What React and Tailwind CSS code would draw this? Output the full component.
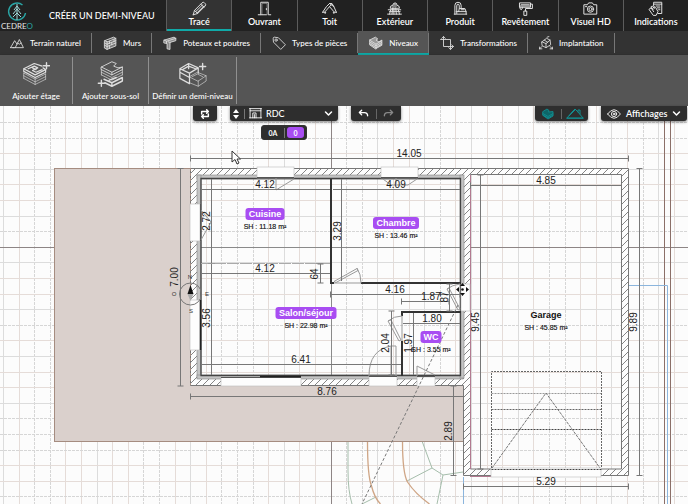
import React from "react";

const iconProps = {
  viewBox: "0 0 24 24",
  fill: "none",
  stroke: "currentColor",
  strokeLinejoin: "round",
  strokeLinecap: "round",
  "aria-hidden": true,
};

function Icon({ className, sw = 1.5, children }) {
  return (
    <svg {...iconProps} strokeWidth={sw} className={className}>
      {children}
    </svg>
  );
}

const tabs = [
  {
    label: "Tracé",
    active: true,
    icon: (
      <>
        <path d="M2 22l2-7L16 3q2-2 4 0l1 1q2 2 0 4L9 20l-7 2zM4 15l5 5M14 5l5 5M6 17L17 6M8 19L19 8" />
      </>
    ),
  },
  {
    label: "Ouvrant",
    icon: (
      <>
        <path d="M2 22h4V2h12v20h4M6 22h9M15 12v2" />
        <path d="M8 22V4h8v18" opacity=".4" />
      </>
    ),
  },
  {
    label: "Toit",
    icon: <path d="M1 18L7 9l5-5 7 5 4 9M1 18h5M5 20v-3l7-8 7 8v3M18 18h5M12 4h4l3 5M12 9l3-3" />,
  },
  {
    label: "Extérieur",
    icon: (
      <>
        <path d="M5 11q0-4 4-4 1-4 4-4t3 4q4 0 4 4zM2 14h20M4 17h17M1 21h22M8 21l1-10M15 21l-1-10M11 21V11M4 21l2-7M20 21l-2-7" />
        <path d="M9 8h6M11 5h3" />
      </>
    ),
  },
  {
    label: "Produit",
    icon: (
      <path d="M3 21V7q0-5 5-5t5 5v4M6 20V8q0-3 2-3t2 3v4M2 21h20M5 17h16v4M9 17l1-5h9l2 5M13 14h5" />
    ),
  },
  {
    label: "Revêtement",
    icon: (
      <>
        <path d="M3 3h17v7H3zM20 5h3v7H12v4M10 16h4v7h-4z" />
        <path d="M3 8h17M5 6h13M3 10q0 4 2 4t2-4" />
      </>
    ),
  },
  {
    label: "Visuel HD",
    icon: (
      <>
        <path d="M2 6h5l2-3h6l2 3h5v15H2z" />
        <circle cx="12" cy="13" r="5" />
        <circle cx="12" cy="13" r="2.5" />
        <path d="M4 9h2" />
      </>
    ),
  },
  {
    label: "Indications",
    icon: (
      <>
        <path d="M9 8V2h13v18h-6M9 5h13M13 8h6M15 11h4M17 14h2" />
        <path d="M2 13l3-2 3 3-3-5 2-1 3 4V9l2 1 4 7-3 6H9zM5 11l4 6" />
      </>
    ),
  },
];

const tools = [
  {
    label: "Terrain naturel",
    first: true,
    icon: <path d="M1 20L8 8l4 6M5 20h18L16 6 9 20M1 20h6M13 12l3 2 3-2" />,
  },
  {
    label: "Murs",
    icon: (
      <>
        <path d="M3 8l15-6 4 2v13L7 23l-4-2zM3 8l4 2 15-6M7 10v13" fill="#777" />
        <path d="M7 14l15-6M7 18l15-6M11 9v4M15 11v4M19 6v4M11 17v4M3 12l4 2M3 16l4 2" />
      </>
    ),
  },
  {
    label: "Poteaux et poutres",
    icon: (
      <>
        <path d="M2 7l17-5 3 2v4L12 11v12l-5-1V13l-5-1z" fill="#888" />
        <path d="M2 7l4 2 16-5M6 9v3M12 11l-3-1" />
      </>
    ),
  },
  {
    label: "Types de pièces",
    icon: (
      <>
        <path d="M2 4q0-2 2-2l7 1 12 12-8 8L3 11z" />
        <circle cx="7" cy="7" r="2" />
      </>
    ),
  },
  {
    label: "Niveaux",
    active: true,
    icon: (
      <>
        <path d="M1 7l10-5 4 3-3 2 5 3 5-3v9l-11 6-10-7z" fill="#999" />
        <path d="M1 7l11 7 10-6M12 14v8M1 10l11 7 10-6M1 13l11 7 10-6" />
      </>
    ),
  },
  {
    label: "Transformations",
    icon: <path d="M6 1v17h17M1 6h17v17M3 4l3-3 3 3M15 20l3 3 3-3M20 15l3 3-3 3" />,
  },
  {
    label: "Implantation",
    icon: (
      <>
        <path d="M5 10l8-6 6 3 1 8-8 5-6-3zM5 10l7 3 7-6M12 13v7M9 7l6 4" />
        <path d="M1 22l4-4M1 22v-3M1 22h4M23 22l-4-4M23 22v-3M23 22h-4M14 2l3-1" />
      </>
    ),
  },
];

const actions = [
  {
    label: "Ajouter étage",
    width: "w-[73px]",
    icon: (
      <>
        <path d="M2 10l12-6 9 3M2 10l13 7 12-6-3-2M2 10v3l13 7 12-6v-3M7 10l7-3 4 2-6 3 4 2 7-3M12 9l4 2" strokeWidth="1.4" />
        <path d="M2 15l13 7 12-6M2 18l13 7 12-6M2 21l13 7 12-6M2 15v6M27 16v6M15 20v8" opacity=".7" />
        <path d="M28 3v7M24.500 6.500h7" strokeWidth="1.600" />
      </>
    ),
  },
  {
    label: "Ajouter sous-sol",
    width: "w-[76px]",
    icon: (
      <>
        <path d="M5 8l12-6 5 2-3 3 5 2 5-1v3l-12 6L5 11zM5 8l12 6 12-6M17 14v3" />
        <path d="M5 14l12 6 12-6M5 17l12 6 12-6M5 11v6M29 11v6" opacity=".8" />
        <path d="M8 22l9 4 12-6v4l-12 6-8-4M17 26v4M14 23l8-3" strokeWidth="1.600" />
        <path d="M5 23v7M1.500 26.500h7" strokeWidth="1.600" />
      </>
    ),
  },
  {
    label: "Définir un demi-niveau",
    width: "w-[88px]",
    icon: (
      <>
        <path d="M1 10l10-6 11 5-10 6zM1 10v11l11 6V15M22 9v6M11 4v6M4 11l7-4 8 3M1 14l11 6" strokeWidth="1.400" />
        <path d="M12 19l9-5 10 4-9 6zM12 19v7l10 4v-6M31 18v6l-9 6M15 19l6-3 6 3" opacity=".7" />
        <path d="M27 4v7M23.500 7.500h7" strokeWidth="1.600" />
      </>
    ),
  },
];

function Logo() {
  return (
    <svg viewBox="0 0 34 30" className="w-[34px] h-[30px] shrink-0" role="img" aria-label="Cedreo">
      <path d="M22.500 4A8.500 8.500 0 1 0 25.500 12" fill="none" stroke="#2aa5a5" strokeWidth="1.400" />
      <path d="M17 3v16M17 5l-3 4M17 5l3 4M17 8l-4 5M17 8l4 5M17 12l-4 4M17 12l4 4" fill="none" stroke="#9fd8d8" strokeWidth="1" />
      <text x="17" y="28" textAnchor="middle" fontSize="8" fontFamily="Lato, sans-serif" fill="#e5e5e5">
        CEDRE<tspan fill="#2aa5a5">O</tspan>
      </text>
    </svg>
  );
}

function Dim({ x1, y1, x2, y2, label, tx, ty, tick = 3, color = "#777" }) {
  const vertical = x1 === x2;
  return (
    <g>
      <line x1={x1} y1={y1} x2={x2} y2={y2} stroke={color} />
      {tick > 0 &&
        (vertical ? (
          <path d={`M${x1 - tick} ${y1}h${tick * 2}M${x1 - tick} ${y2}h${tick * 2}`} stroke={color} />
        ) : (
          <path d={`M${x1} ${y1 - tick}v${tick * 2}M${x2} ${y1 - tick}v${tick * 2}`} stroke={color} />
        ))}
      <text
        x={tx}
        y={ty}
        fontSize="10"
        fill="#222"
        textAnchor="middle"
        dominantBaseline="central"
        transform={vertical ? `rotate(-90 ${tx} ${ty})` : undefined}
      >
        {label}
      </text>
    </g>
  );
}

function Room({ cx, y, w, name, area }) {
  return (
    <g textAnchor="middle">
      {w && <rect x={cx - w / 2} y={y - 6} width={w} height="12" rx="3" fill="#a84df2" />}
      <text x={cx} y={y + 3} fontSize="9" fontWeight="700" fill={w ? "#fff" : "#111"}>
        {name}
      </text>
      <text x={cx} y={y + 15} fontSize="7" fill="#111" stroke="#111" strokeWidth=".15">
        {area}
      </text>
    </g>
  );
}

const dashedColumns = [2, 3, 9, 10, 14, 15, 16, 22, 23, 28, 35, 36, 41];
const dashedRows = [0, 1, 7, 13, 19, 20, 21, 24];
const columns = Array.from({ length: 44 }, (_, i) => i);
const rows = Array.from({ length: 26 }, (_, i) => i);

function Grid() {
  return (
    <g>
      {columns.map((i) => {
        const x = Math.round(3 + i * 15.6) + 0.5;
        const dashed = dashedColumns.includes(i);
        return (
          <line key={i} x1={x} x2={x} y1="106" y2="504" stroke={dashed ? "#d6d6d6" : i % 3 ? "#e5dcd8" : "#dcdcdc"} strokeDasharray={dashed ? "3 1" : undefined} />
        );
      })}
      {rows.map((i) => {
        const y = Math.round(122 + i * 15.6) + 0.5;
        const dashed = dashedRows.includes(i);
        return (
          <line key={i} x1="0" x2="688" y1={y} y2={y} stroke={dashed ? "#d6d6d6" : i % 3 ? "#e5dcd8" : "#dcdcdc"} strokeDasharray={dashed ? "3 1" : undefined} />
        );
      })}
    </g>
  );
}

const walls = [
  [190, 168, 438, 7],
  [190, 175, 7, 210],
  [190, 378, 280, 7],
  [463, 168, 7, 308],
  [621, 168, 7, 308],
  [463, 469, 165, 7],
];

const insulation = [
  [197, 175, 266, 4],
  [197, 175, 4, 203],
  [197, 375, 266, 4],
  [460, 175, 4, 203],
];

const openings = [
  [257, 167, 37, 11],
  [381, 167, 37, 11],
  [190, 204, 10, 37],
  [190, 300, 10, 50],
  [221, 377, 80, 9],
  [369, 376, 28, 10],
  [417, 377, 18, 9],
  [461, 284, 9, 27],
  [491, 468, 110, 9],
];

function Plan() {
  return (
    <svg
      viewBox="0 106 688 398"
      preserveAspectRatio="xMidYMin slice"
      className="block w-full h-full"
      fontFamily="'Liberation Sans', Arial, sans-serif"
      role="img"
      aria-label="Plan du rez-de-chaussée"
    >
      <defs>
        <pattern id="hatch" width="7" height="7" patternUnits="userSpaceOnUse">
          <rect width="7" height="7" fill="#fdfdfd" />
          <path d="M-1 8L8 -1M-1 1L1 -1M6 8L8 6" stroke="#777" strokeWidth=".9" />
        </pattern>
      </defs>
      <rect x="0" y="106" width="688" height="398" fill="#fcfcfc" />
      <Grid />
      <path d="M0 247.500H688M331.500 106V504" stroke="#8d8585" />

      <g fill="none">
        <path d="M348 441v30q0 20 4 33M422 441l10 27-25 13M432 468l11 7-6 29M443 475l20-3M362 504l14-7" stroke="#a5bdab" />
        <path d="M367.500 441q0 35 4 45 3 12 9 18M402.500 441q0 32 5 41 8 12 22 22" stroke="#cfa585" strokeWidth="1.300" />
      </g>

      <rect x="54.500" y="168.500" width="409" height="273" fill="#dad0cc" stroke="#a58c80" />
      <rect x="190" y="168" width="280" height="217" fill="#fcfcfc" />
      <svg x="201" y="179" width="260" height="196" viewBox="201 179 260 196">
        <Grid />
        <path d="M201 247.500H461M331.500 179V375" stroke="#8a8a8a" />
      </svg>

      {walls.map(([x, y, w, h], i) => (
        <rect key={i} x={x} y={y} width={w} height={h} fill="url(#hatch)" />
      ))}
      <path d="M190.500 385.500V168.500H628.500V475.500H463.500V385.500zM470.500 174.500H621.500V469H470.500z" fill="none" stroke="#777" />
      <path d="M197.500 378.500V175.500H463.500V378.500z" fill="none" stroke="#777" />
      <path d="M470.500 175V469M470 476.500H601" stroke="#b27a90" />
      <path d="M190.500 168V385" stroke="#a58c80" strokeDasharray="3 2" />
      {insulation.map(([x, y, w, h], i) => (
        <rect key={i} x={x} y={y} width={w} height={h} fill="#c4c4c4" stroke="#888" strokeWidth=".6" />
      ))}
      <path d="M201 375.500V178.500H460.500V375.500z" fill="none" stroke="#444" strokeWidth="1.300" />
      {openings.map(([x, y, w, h], i) => (
        <rect key={i} x={x} y={y} width={w} height={h} fill="#fdfdfd" stroke="#bbb" strokeWidth=".6" />
      ))}
      <path d="M257 177.500h37M381 177.500h37M200.500 204v37M221 377.500h80M369 376.500h28M417 376.500h18" stroke="#555" />
      <path d="M200.500 300v50M260 376.500h41" stroke="#222" strokeWidth="1.500" />

      <path d="M331 179V284M330 283H334M361 283H461M401 312H461M402 312V316M402 341V376" stroke="#333" strokeWidth="2" fill="none" />
      <path d="M201 263.500H330" stroke="#aaa" strokeDasharray="12 1" />
      <g fill="none" stroke="#999">
        <path d="M276 178v12l18-11M383 179l8 6h17l9-6M396 178v6M201 210l10 12-10 18M208 263.500h7M316 263.500h7" />
        <path d="M334 281.500l23-13 1 2-22 12zM357 268q4 6 4 15M334 283h27" />
        <path d="M388 321l11 20 2-1-10-20zM388 321q6-5 14-5M402 316v25" />
        <path d="M447 289l11 21 2-1-11-21zM447 289q5-4 13-5" />
        <path d="M369 376q0-26 22-30M391 346v30M396 346v30M391 346h5" />
        <path d="M417 376v-10l18 9" />
      </g>
      <path d="M458 305L362 504" stroke="#777" strokeDasharray="3 2" />

      <g fill="none" stroke="#666">
        <path d="M491.500 468V371.500H601.500V468M491.500 409.500H601" strokeDasharray="2 1" />
        <path d="M491.500 429.500H601M491.500 469.500H601" stroke="#444" strokeDasharray="2 1" />
        <path d="M491.500 393.500H601" stroke="#999" strokeDasharray="2 1" />
        <path d="M492 468L546 393L600 468" stroke="#777" strokeDasharray="3 1" />
      </g>

      <path d="M664.500 106V504M670.500 106V504" stroke="#8b6f68" />
      <path d="M629 285.500H667.500V504M463.500 477V504" stroke="#8bb5dd" fill="none" />

      <Dim x1={190.5} y1={158.5} x2={628.5} y2={158.5} label="14.05" tx={409} ty={153} />
      <Dim x1={190.5} y1={396.5} x2={463.5} y2={396.5} label="8.76" tx={327} ty={391} />
      <Dim x1={180.5} y1={168.5} x2={180.5} y2={386} label="7.00" tx={174} ty={277} />
      <Dim x1={453.5} y1={386} x2={453.5} y2={475.5} label="2.89" tx={448} ty={431} />
      <Dim x1={463.5} y1={486.5} x2={628.5} y2={486.5} label="5.29" tx={546} ty={481} />
      <Dim x1={639.5} y1={168.5} x2={639.5} y2={475.5} label="9.89" tx={633} ty={322} />
      <Dim x1={470.5} y1={185.5} x2={621.5} y2={185.5} label="4.85" tx={546} ty={180} />
      <Dim x1={480.5} y1={175} x2={480.5} y2={469} label="9.45" tx={475} ty={322} />
      <Dim x1={201} y1={189.5} x2={330} y2={189.5} label="4.12" tx={265} ty={184} tick={0} />
      <Dim x1={333} y1={189.5} x2={460} y2={189.5} label="4.09" tx={396} ty={184} tick={0} />
      <Dim x1={211.5} y1={179} x2={211.5} y2={263} label="2.72" tx={206} ty={221} tick={0} />
      <Dim x1={341.5} y1={179} x2={341.5} y2={281} label="3.29" tx={337} ty={231} tick={0} />
      <Dim x1={201} y1={273.5} x2={330} y2={273.5} label="4.12" tx={265} ty={268} tick={0} />
      <Dim x1={320.5} y1={264} x2={320.5} y2={283} label="64" tx={314} ty={274} />
      <Dim x1={211.5} y1={264} x2={211.5} y2={375} label="3.56" tx={206} ty={318} tick={0} />
      <Dim x1={201} y1={364.5} x2={401} y2={364.5} label="6.41" tx={301} ty={359} tick={0} />
      <Dim x1={330.5} y1={294.5} x2={460} y2={294.5} label="4.16" tx={395} ty={289} />
      <Dim x1={401.5} y1={301.5} x2={449} y2={301.5} label="1.87" tx={431} ty={296} />
      <Dim x1={449.5} y1={284} x2={449.5} y2={311} label="87" tx={444} ty={297} />
      <Dim x1={403} y1={323.5} x2={460} y2={323.5} label="1.80" tx={432} ty={318} tick={0} />
      <Dim x1={391.5} y1={311} x2={391.5} y2={375} label="2.04" tx={385} ty={343} />
      <Dim x1={413.5} y1={313} x2={413.5} y2={375} label="1.97" tx={408} ty={343} tick={0} />

      <Room cx={265} y={214} w={39} name="Cuisine" area="SH : 11.18 m²" />
      <Room cx={396} y={223} w={46} name="Chambre" area="SH : 13.46 m²" />
      <Room cx={306} y={313} w={61} name="Salon/séjour" area="SH : 22.98 m²" />
      <Room cx={431} y={337} w={21} name="WC" area="SH : 3.55 m²" />
      <Room cx={546} y={315} name="Garage" area="SH : 45.85 m²" />

      <circle cx="190.500" cy="294" r="11" fill="none" stroke="#777" />
      <path d="M190.500 285l3 9h-6z" fill="#111" />
      <path d="M187.500 294h6l-3 7z" fill="#aaa" />
      <g fontSize="6" fill="#333" textAnchor="middle">
        <text x="190" y="279">N</text>
        <text x="191" y="313">S</text>
        <text x="174" y="296">O</text>
        <text x="207" y="296">E</text>
      </g>

      <g fill="#111">
        <path d="M462.500 283l2.500 3h-5zM462.500 296l2.500-3h-5zM456 289.500l3-2.500v5zM469 289.500l-3-2.500v5z" />
        <circle cx="462.500" cy="289.500" r="1.300" />
      </g>

      <path d="M232 151v11l3-2.500 2 4.500 2-1-2-4h3.500z" fill="#fff" stroke="#333" />
    </svg>
  );
}

function Chevron() {
  return (
    <Icon className="w-[9px] h-[9px] shrink-0 pointer-events-none" sw={4}>
      <path d="M4 8l8 8 8-8" />
    </Icon>
  );
}

const panel = "flex items-center h-[15px] bg-[#2e2e2e] rounded-b-[3px] shadow-[0_1px_3px_rgba(0,0,0,0.5)]";

export default function App() {
  return (
    <div className="flex flex-col min-h-screen overflow-hidden bg-[#fcfcfc] font-['Lato','Open_Sans',sans-serif] text-white">
      <header>
        <div className="flex h-[31px] bg-[#212121]">
          <div className="flex w-[166px] shrink-0 items-center">
            <Logo />
            <h1 className="ml-[15px] whitespace-nowrap text-[9px] leading-[12px] font-medium">CRÉER UN DEMI-NIVEAU</h1>
          </div>
          <nav className="flex flex-1">
            {tabs.map((tab) => (
              <button
                key={tab.label}
                className={
                  "flex flex-1 basis-0 flex-col items-center border-l border-[#5c5c5c] pt-px text-[9px] leading-[12px] font-semibold " +
                  (tab.active ? "bg-[#333] shadow-[inset_0_-2px_0_#10aaa8]" : "")
                }
              >
                <Icon className="w-[15px] h-[15px] shrink-0 text-[#dedede]" sw={1.6}>
                  {tab.icon}
                </Icon>
                {tab.label}
              </button>
            ))}
          </nav>
        </div>

        <nav className="flex h-[24px] bg-[#333]">
          {tools.map((tool) => (
            <button
              key={tool.label}
              className={
                "relative flex items-center gap-[6px] whitespace-nowrap pr-[11px] text-[8px] leading-[12px] font-medium after:absolute after:right-0 after:inset-y-[2px] after:w-px after:bg-[#777] " +
                (tool.first ? "pl-[10px] " : "pl-[11px] ") +
                (tool.active ? "bg-[#555] shadow-[inset_0_-2px_0_#10aaa8]" : "")
              }
            >
              <Icon className="w-[14px] h-[14px] shrink-0 text-[#dedede]">{tool.icon}</Icon>
              {tool.label}
            </button>
          ))}
        </nav>

        <div className="relative flex h-[51px] bg-[#555] py-[2px] shadow-[0_1px_3px_rgba(0,0,0,0.4)]">
          {actions.map((action) => (
            <button
              key={action.label}
              className={action.width + " flex shrink-0 flex-col items-center gap-[3px] whitespace-nowrap border-r border-[#909090] pt-[3px] text-[8px] leading-[10px] font-medium"}
            >
              <svg {...iconProps} viewBox="0 0 32 32" className="h-[28px] w-[28px] shrink-0 text-[#dedede]">
                {action.icon}
              </svg>
              {action.label}
            </button>
          ))}
        </div>
      </header>

      <main className="relative flex-1">
        <Plan />

        <div className="absolute inset-x-0 top-0 flex items-start pl-[193px] pr-[1px] text-[9px] leading-[12px]">
          <button aria-label="Inverser" className={panel + " w-[24px] justify-center"}>
            <Icon className="w-[10px] h-[10px]" sw={3.5}>
              <path d="M4 12V6h16M16 2l4 4-4 4M20 12v6H4M8 14l-4 4 4 4" />
            </Icon>
          </button>

          <div className="ml-[13px]">
            <div className={panel + " w-[108px] gap-[4px] pl-[2px] pr-[5px]"}>
              <button aria-label="Changer de niveau" className="shrink-0">
                <svg viewBox="0 0 8 12" className="h-[12px] w-[8px] fill-white">
                  <path d="M4 1l3 4H1zM4 11l3-4H1z" />
                </svg>
              </button>
              <span className="h-[10px] w-px bg-[#777]" />
              <Icon className="h-[13px] w-[13px] shrink-0" sw={1.6}>
                <path d="M1 3h22M1 20h22M2 3v17M22 3v17M2 7h20M7 20v-9h6v9M10 20v-6" />
              </Icon>
              <select aria-label="Niveau" className="min-w-0 flex-1 appearance-none bg-transparent text-[9px] leading-[12px] font-medium outline-none">
                <option>RDC</option>
              </select>
              <Chevron />
            </div>
            <div className="ml-[31px] mt-[4px] flex h-[15px] w-[46px] items-center rounded-[3px] border border-[#333] bg-[#2e2e2e] text-[7px] leading-[10px] font-bold">
              <button className="flex-1">0A</button>
              <span className="h-[10px] w-px bg-[#777]" />
              <button className="mx-[2px] h-[11px] w-[17px] rounded-[3px] bg-[#a84df2]">0</button>
            </div>
          </div>

          <div className={panel + " ml-[13px] w-[50px]"}>
            <button aria-label="Annuler" className="flex flex-1 justify-center">
              <Icon className="h-[11px] w-[11px]" sw={3}>
                <path d="M8 5l-5 5 5 5M3 10h11q7 0 7 7" />
              </Icon>
            </button>
            <span className="h-[10px] w-px bg-[#666]" />
            <button aria-label="Rétablir" className="flex flex-1 justify-center text-[#888]">
              <Icon className="h-[11px] w-[11px]" sw={3}>
                <path d="M16 5l5 5-5 5M21 10H10q-7 0-7 7" />
              </Icon>
            </button>
          </div>

          <div className={panel + " ml-auto w-[53px] text-[#138c8e]"}>
            <button aria-label="Vue des niveaux" className="flex flex-1 justify-center">
              <Icon className="h-[12px] w-[12px]" sw={1.8}>
                <path d="M2 7l8-5 4 3-1 3 9-1v9l-10 6-10-7z" fill="#0d6668" />
                <path d="M2 11l10 6 10-6M2 14l10 6 10-6" />
              </Icon>
            </button>
            <span className="h-[10px] w-px bg-[#666]" />
            <button aria-label="Vue du toit" className="flex flex-1 justify-center">
              <svg {...iconProps} viewBox="0 0 18 12" className="h-[12px] w-[18px]">
                <path d="M1 10L6 4l3-3 3 3 5 6zM1 10h16M3 8l6-6M12 4V2h2v4" />
              </svg>
            </button>
          </div>

          <button className={panel + " ml-[13px] w-[86px] gap-[5px] px-[6px] font-semibold"}>
            <Icon className="h-[14px] w-[14px] shrink-0">
              <path d="M1 12q11-15 22 0-11 15-22 0z" />
              <circle cx="12" cy="12" r="4.500" />
              <circle cx="12" cy="12" r="1.500" />
            </Icon>
            <span className="flex-1 text-left">Affichages</span>
            <Chevron />
          </button>
        </div>
      </main>
    </div>
  );
}
